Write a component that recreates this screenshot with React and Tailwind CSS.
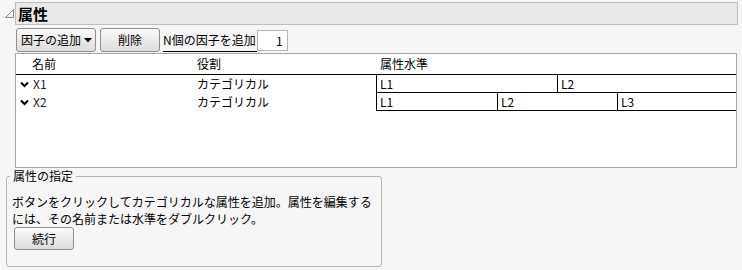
import React from "react";

const font = { fontFamily: '"Noto Sans CJK JP", "Noto Sans", sans-serif' };

function Chevron() {
  return (
    <svg width="9" height="7" viewBox="0 0 9 7" className="shrink-0">
      <polyline points="1,1.5 4.5,5 8,1.5" fill="none" stroke="#000" strokeWidth="2" />
    </svg>
  );
}

function Btn({ children, className = "" }) {
  return (
    <div
      className={
        "flex items-center justify-center rounded-[3px] border border-[#8f8f8f] bg-gradient-to-b from-[#fbfbfb] to-[#dcdcdc] text-[12px] text-black " +
        className
      }
    >
      {children}
    </div>
  );
}

export default function App() {
  return (
    <div
      className="w-[742px] h-[270px] bg-[#f6f6f6] text-black text-[12px] leading-none overflow-hidden"
      style={font}
    >
      {/* Header */}
      <div className="flex items-center pt-[2px] pr-[4px]">
        <div className="w-[15px] flex justify-center">
          <svg width="9" height="9" viewBox="0 0 9 9" className="ml-[3px]">
            <polygon points="8.5,0.5 8.5,8.5 0.5,8.5" fill="none" stroke="#8a8a8a" strokeWidth="1" />
          </svg>
        </div>
        <div className="flex-1 h-[23px] bg-[#e9e9e9] border border-[#bdbdbd] flex items-center pl-[2px]">
          <span className="text-[15px] font-bold">属性</span>
        </div>
      </div>

      {/* Controls */}
      <div className="flex items-center pl-[16px] mt-[3px] h-[24px]">
        <Btn className="w-[80px] h-[24px] justify-start pl-[4px] gap-[3px]">
          <span>因子の追加</span>
          <svg width="8" height="5" viewBox="0 0 8 5">
            <polygon points="0,0 8,0 4,4.5" fill="#000" />
          </svg>
        </Btn>
        <Btn className="w-[60px] h-[24px] ml-[4px]">削除</Btn>
        <div className="ml-[3px] h-[23px] flex items-center border-b border-black pr-[1px]">
          N個の因子を追加
        </div>
        <div className="w-[31px] h-[21px] mt-[1px] bg-white border border-[#b5b5b5] flex items-center justify-end pr-[4px]">
          1
        </div>
      </div>

      {/* Table */}
      <div className="ml-[15px] mr-[5px] mt-[1px] h-[115px] bg-white border border-[#a6a6a6]">
        <div className="flex h-[21px] items-center border-b border-black">
          <div className="w-[181px] pl-[16px]">名前</div>
          <div className="w-[179px]">役割</div>
          <div className="pl-[4px]">属性水準</div>
        </div>
        <div className="flex h-[18px] items-center">
          <div className="w-[181px] pl-[4px] flex items-center gap-[4px]">
            <Chevron />
            <span className="text-[#1a1a40]">X1</span>
          </div>
          <div className="w-[179px]">カテゴリカル</div>
          <div className="flex-1 flex h-full border-l border-b border-black">
            <div className="w-[181px] border-r border-black flex items-center pl-[3px]">L1</div>
            <div className="flex-1 flex items-center pl-[3px]">L2</div>
          </div>
        </div>
        <div className="flex h-[18px] items-center">
          <div className="w-[181px] pl-[4px] flex items-center gap-[4px]">
            <Chevron />
            <span className="text-[#1a1a40]">X2</span>
          </div>
          <div className="w-[179px]">カテゴリカル</div>
          <div className="flex-1 flex h-full border-l border-b border-black">
            <div className="w-[121px] border-r border-black flex items-center pl-[3px]">L1</div>
            <div className="w-[120px] border-r border-black flex items-center pl-[3px]">L2</div>
            <div className="flex-1 flex items-center pl-[3px]">L3</div>
          </div>
        </div>
      </div>

      {/* Fieldset */}
      <fieldset className="ml-[6px] mt-[1px] w-[376px] min-w-0 h-[98px] border border-[#b5b5b5] rounded-[3px] px-[5px] pt-[10px]">
        <legend className="px-[3px] ml-[-2px] text-[12px] leading-[14px]">属性の指定</legend>
        <div className="text-[12px] leading-[17px] whitespace-nowrap">
          ボタンをクリックしてカテゴリカルな属性を追加。属性を編集する
          <br />
          には、その名前または水準をダブルクリック。
        </div>
        <Btn className="w-[60px] h-[23px] ml-[2px]">続行</Btn>
      </fieldset>
    </div>
  );
}
